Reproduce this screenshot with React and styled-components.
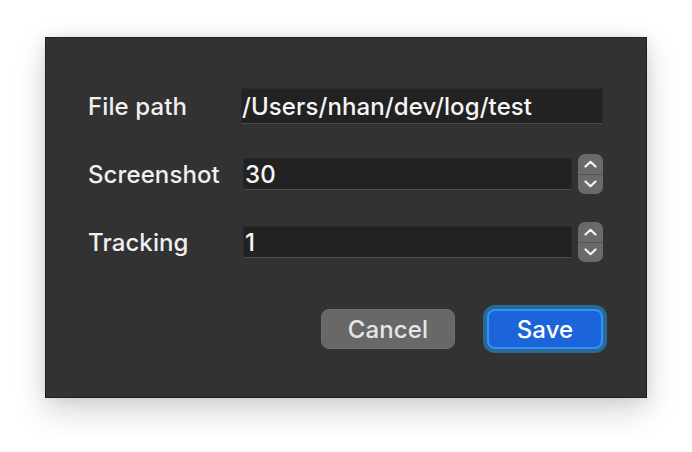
import styled, { createGlobalStyle } from 'styled-components';

const GlobalStyle = createGlobalStyle`
  html, body {
    margin: 0;
    background: #ffffff;
    font-family: Inter, "Liberation Sans", sans-serif;
  }
`;

const Page = styled.div`
  padding: 37px 45px;
`;

const Dialog = styled.div`
  width: 602px;
  height: 361px;
  box-sizing: border-box;
  padding: 48px 43px 43px 42px;
  background: #323232;
  border: 1px solid #1f1f1f;
  box-shadow: 0 12px 30px rgba(0, 0, 0, 0.18), 0 0 12px rgba(0, 0, 0, 0.08);
  display: flex;
  flex-direction: column;
`;

const Form = styled.div`
  display: flex;
  flex-direction: column;
  gap: 28px;
`;

const Row = styled.div`
  height: 40px;
  display: flex;
  align-items: center;
`;

const Label = styled.label`
  width: ${({ $w }) => $w}px;
  flex-shrink: 0;
  color: #f0f0f0;
  font-size: 24px;
  font-weight: 500;
  letter-spacing: 0.1px;
`;

const Field = styled.div`
  flex: 1;
  height: ${({ $h }) => $h}px;
  box-sizing: border-box;
  display: flex;
  align-items: center;
  padding-left: ${({ $pad }) => $pad}px;
  background: #222222;
  border: 1px solid #292929;
  border-bottom-color: #4c4c4c;
  color: #f6f6f6;
  font-size: 24px;
  font-weight: 500;
  letter-spacing: 0.1px;
`;

const Stepper = styled.div`
  width: 25px;
  height: 40px;
  margin-left: 6px;
  box-sizing: border-box;
  border-radius: 7px;
  background: #6a6a6a;
  display: flex;
  flex-direction: column;
  overflow: hidden;
`;

const StepHalf = styled.div`
  flex: 1;
  display: flex;
  align-items: center;
  justify-content: center;
  border-top: ${({ $lower }) => ($lower ? '1px solid #555555' : 'none')};
`;

const Actions = styled.div`
  margin-top: auto;
  height: 50px;
  display: flex;
  align-items: center;
  justify-content: flex-end;
  gap: 32px;
`;

const Button = styled.button`
  height: 40px;
  box-sizing: border-box;
  border-radius: 8px;
  font-family: inherit;
  font-size: 24px;
  font-weight: 500;
  letter-spacing: 0.1px;
  padding: 0;
  color: ${({ $primary }) => ($primary ? '#ffffff' : '#e6e6e6')};
  width: ${({ $w }) => $w}px;
  background: ${({ $primary }) => ($primary ? '#1c64d9' : '#686868')};
  border: ${({ $primary }) => ($primary ? '2px solid #3593f7' : '1px solid #6e6e6e')};
  box-shadow: ${({ $primary }) => ($primary ? '0 0 0 4px #296996' : 'none')};
`;

function Chevron({ up }) {
  return (
    <svg width="13" height="8" viewBox="0 0 13 8">
      <path
        d={up ? 'M1.5 6.5 L6.5 1.8 L11.5 6.5' : 'M1.5 1.5 L6.5 6.2 L11.5 1.5'}
        fill="none"
        stroke="#f4f4f4"
        strokeWidth="2.2"
        strokeLinecap="round"
        strokeLinejoin="round"
      />
    </svg>
  );
}

function NumberStepper() {
  return (
    <Stepper>
      <StepHalf><Chevron up /></StepHalf>
      <StepHalf $lower><Chevron /></StepHalf>
    </Stepper>
  );
}

export default function App() {
  return (
    <>
      <GlobalStyle />
      <Page>
        <Dialog>
          <Form>
            <Row>
              <Label $w={153}>File path</Label>
              <Field $h={36} $pad={0}>/Users/nhan/dev/log/test</Field>
            </Row>
            <Row>
              <Label $w={155}>Screenshot</Label>
              <Field $h={32} $pad={1}>30</Field>
              <NumberStepper />
            </Row>
            <Row>
              <Label $w={155}>Tracking</Label>
              <Field $h={32} $pad={1}>1</Field>
              <NumberStepper />
            </Row>
          </Form>
          <Actions>
            <Button $w={134}>Cancel</Button>
            <Button $primary $w={116}>Save</Button>
          </Actions>
        </Dialog>
      </Page>
    </>
  );
}
